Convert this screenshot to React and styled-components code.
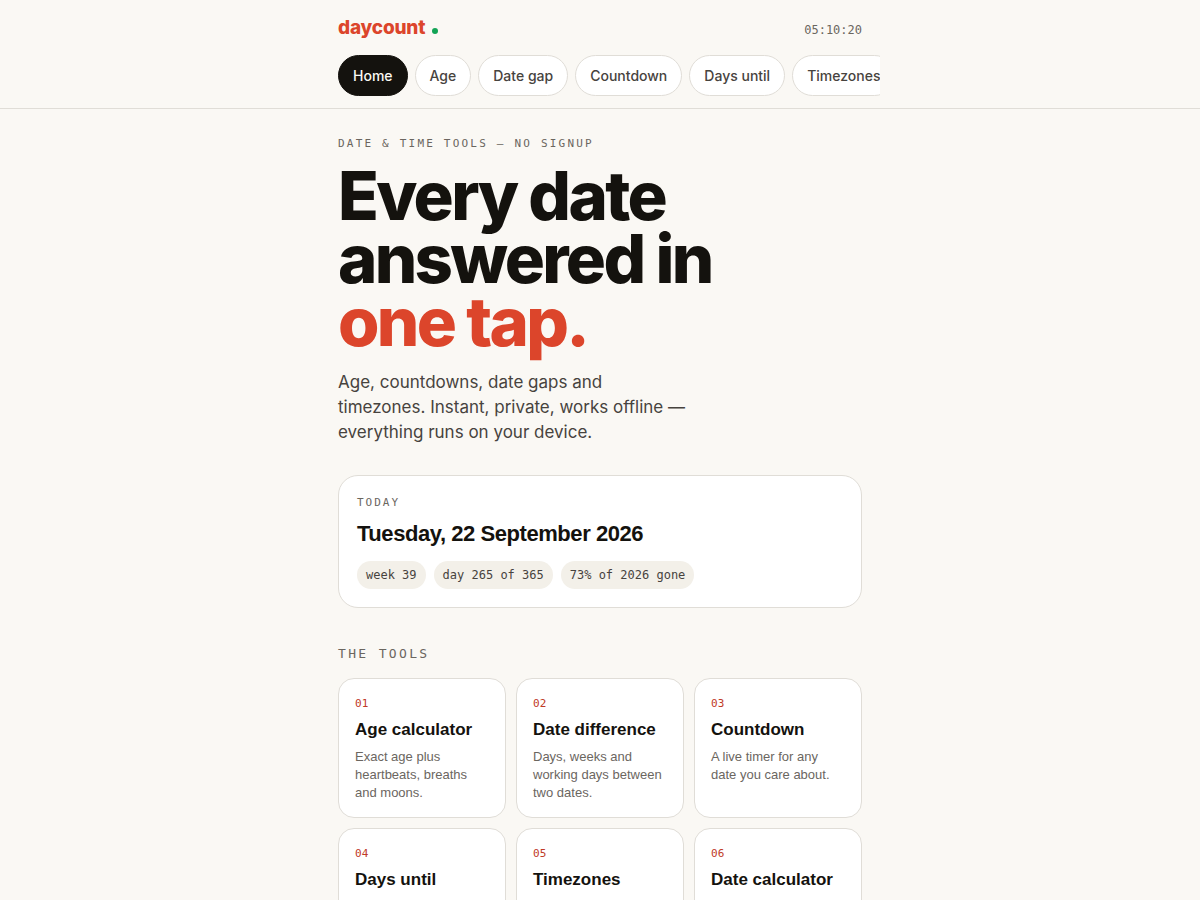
import React from 'react'
import styled, { createGlobalStyle } from 'styled-components'

const links = ['Home', 'Age', 'Date gap', 'Countdown', 'Days until', 'Timezones'];

const chips = ['week 39', 'day 265 of 365', '73% of 2026 gone'];

const tools = [
    { title: 'Age calculator', text: 'Exact age plus heartbeats, breaths and moons.' },
    { title: 'Date difference', text: 'Days, weeks and working days between two dates.' },
    { title: 'Countdown', text: 'A live timer for any date you care about.' },
    { title: 'Days until', text: 'How long until the next big day.' },
    { title: 'Timezones', text: 'Compare the time in cities around the world.' },
    { title: 'Date calculator', text: 'Add or subtract days from any date.' },
];

function App() {
    return (
        <>
            <GlobalStyle />
            <Header>
                <Wrap>
                    <TopBar>
                        <Brand href="#home">daycount<Dot /></Brand>
                        <Clock>05:10:20</Clock>
                    </TopBar>
                    <Nav>
                        {links.map((link, i) => (
                            <Pill key={link} href={`#${link}`} $active={i === 0}>{link}</Pill>
                        ))}
                    </Nav>
                </Wrap>
            </Header>
            <Wrap as="main">
                <Eyebrow>DATE &amp; TIME TOOLS — NO SIGNUP</Eyebrow>
                <Title>Every date answered in <em>one tap.</em></Title>
                <Lead>
                    Age, countdowns, date gaps and timezones. Instant, private, works offline — everything runs on your device.
                </Lead>
                <Today>
                    <Label>TODAY</Label>
                    <TodayDate>Tuesday, 22 September 2026</TodayDate>
                    <Chips>
                        {chips.map(chip => <Chip key={chip}>{chip}</Chip>)}
                    </Chips>
                </Today>
                <SectionTitle>THE TOOLS</SectionTitle>
                <Grid>
                    {tools.map((tool, i) => (
                        <Card key={tool.title} href={`#tool-${i + 1}`}>
                            <Num>0{i + 1}</Num>
                            <CardTitle>{tool.title}</CardTitle>
                            <CardText>{tool.text}</CardText>
                        </Card>
                    ))}
                </Grid>
            </Wrap>
        </>
    )
}


const GlobalStyle = createGlobalStyle`
    :root{
        --bg: #faf8f4;
        --surface: #fff;
        --chip: #f3f0e9;
        --ink: #14120e;
        --text: #47433e;
        --muted: #6b665f;
        --line: #e0ddd7;
        --accent: #dc452b;
        --accent-dark: #c03a26;
        --green: #12a355;
        --sans: "Liberation Sans", Arial, sans-serif;
        --ui: Inter, "Liberation Sans", sans-serif;
        --mono: "DejaVu Sans Mono", "Liberation Mono", monospace;
    }

    *{
        box-sizing: border-box;
        margin: 0;
        padding: 0;
    }

    html{
        scrollbar-width: none;
    }

    body{
        background: var(--bg);
        color: var(--ink);
        font-family: var(--sans);
    }

    a{
        color: inherit;
        text-decoration: none;
    }
`;

const Wrap = styled.div`
    max-width: 560px;
    margin: 0 auto;
    padding: 0 18px;
`;

const Header = styled.header`
    border-bottom: 1px solid var(--line);
`;

const TopBar = styled.div`
    display: flex;
    align-items: baseline;
    justify-content: space-between;
    padding-top: 16px;
`;

const Brand = styled.a`
    color: var(--accent);
    font: 800 19px/24px var(--ui);
    letter-spacing: -0.01em;
`;

const Dot = styled.span`
    display: inline-block;
    width: 6px;
    height: 6px;
    margin-left: 7px;
    border-radius: 50%;
    background: var(--green);
`;

const Clock = styled.time`
    color: var(--muted);
    font: 12px/18px var(--mono);
`;

const Nav = styled.nav`
    display: flex;
    gap: 7px;
    margin: 0 -18px;
    padding: 15px 18px 12px;
    overflow-x: auto;
    scrollbar-width: none;
`;

const Pill = styled.a`
    flex: none;
    padding: 9px 14px;
    border: 1px solid ${props => props.$active ? 'var(--ink)' : 'var(--line)'};
    border-radius: 999px;
    background: ${props => props.$active ? 'var(--ink)' : 'var(--surface)'};
    color: ${props => props.$active ? 'var(--bg)' : 'var(--text)'};
    font: 500 14px/21px var(--ui);
`;

const Label = styled.p`
    color: var(--muted);
    font: 11px/18px var(--mono);
    letter-spacing: 0.18em;
`;

const Eyebrow = styled(Label)`
    margin-top: 26px;
    letter-spacing: 0.2em;
`;

const Title = styled.h1`
    max-width: 440px;
    margin-top: 11px;
    font: 800 67px/63px var(--ui);
    letter-spacing: -0.04em;

    em{
        display: block;
        color: var(--accent);
        font-style: normal;
    }
`;

const Lead = styled.p`
    max-width: 352px;
    margin-top: 17px;
    color: var(--text);
    font: 17px/25px var(--ui);
`;

const Today = styled.section`
    margin-top: 30px;
    padding: 18px;
    border: 1px solid var(--line);
    border-radius: 20px;
    background: var(--surface);
`;

const TodayDate = styled.h2`
    margin-top: 8px;
    font: 700 22px/28px var(--sans);
    letter-spacing: -0.02em;
`;

const Chips = styled.div`
    display: flex;
    flex-wrap: wrap;
    gap: 8px;
    margin-top: 13px;
`;

const Chip = styled.span`
    padding: 5px 9px;
    border-radius: 999px;
    background: var(--chip);
    color: var(--text);
    font: 12px/18px var(--mono);
`;

const SectionTitle = styled.h2`
    margin: 36px 0 15px;
    color: var(--muted);
    font: 400 13px/19px var(--mono);
    letter-spacing: 0.18em;
`;

const Grid = styled.div`
    display: grid;
    grid-template-columns: repeat(3, 1fr);
    gap: 10px;
    padding-bottom: 40px;
`;

const Card = styled.a`
    padding: 17px 16px 15px;
    border: 1px solid var(--line);
    border-radius: 16px;
    background: var(--surface);
`;

const Num = styled.p`
    color: var(--accent-dark);
    font: 11px/16px var(--mono);
`;

const CardTitle = styled.h3`
    margin: 6px 0;
    font: 700 17px/24px var(--sans);
    white-space: nowrap;
`;

const CardText = styled.p`
    color: var(--muted);
    font-size: 13px;
    line-height: 18px;
`;

export default App
